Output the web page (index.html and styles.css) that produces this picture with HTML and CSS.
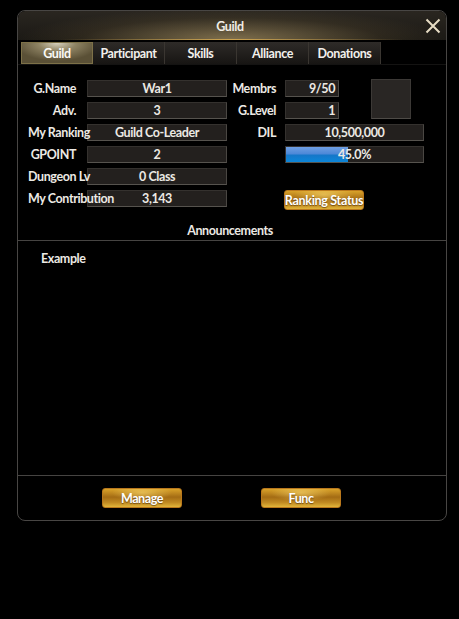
FILE: index.html
```html
<!DOCTYPE html>
<html>
<head>
<meta charset="utf-8">
<link rel="stylesheet" href="styles.css">
</head>
<body>
<div class="panel">
  <div class="header">
    <span class="title">Guild</span>
    <span class="close"><svg width="16" height="16" viewBox="0 0 16 16"><path d="M1.5 1.5 L14.5 14.5 M14.5 1.5 L1.5 14.5" stroke="#e6dcc4" stroke-width="2" fill="none"/></svg></span>
  </div>
  <div class="tabs">
    <div class="tab active">Guild</div>
    <div class="tab">Participant</div>
    <div class="tab">Skills</div>
    <div class="tab">Alliance</div>
    <div class="tab">Donations</div>
  </div>
  <div class="info">
    <div class="lbl">G.Name</div><div class="fld c3">War1</div>
    <div class="lbl r c4">Membrs</div><div class="fld c6 num">9/50</div>
    <div class="avatar"></div>

    <div class="lbl">Adv.</div><div class="fld c3">3</div>
    <div class="lbl r c4">G.Level</div><div class="fld c6 num">1</div>

    <div class="lbl">My Ranking</div><div class="fld c3">Guild Co-Leader</div>
    <div class="lbl r c4">DIL</div><div class="fld wide">10,500,000</div>

    <div class="lbl">GPOINT</div><div class="fld c3">2</div>
    <div class="fld wide bar"><div class="fill" style="width:45%"></div><span class="pct">45.0%</span></div>

    <div class="lbl">Dungeon Lv</div><div class="fld c3">0 Class</div>

    <div class="lbl">My Contribution</div><div class="fld c3">3,143</div>
    <div class="gold rank">Ranking Status</div>
  </div>
  <div class="ann-head">Announcements</div>
  <div class="ann-body">Example</div>
  <div class="footer">
    <div class="gold btn">Manage</div>
    <div class="gold btn">Func</div>
  </div>
</div>
</body>
</html>
```
FILE: styles.css
```css
html, body {
  margin: 0;
  padding: 0;
  background: #000;
}
body {
  font-family: Lato, "Noto Sans", sans-serif;
  font-weight: 700;
  font-size: 12.5px;
  letter-spacing: -0.4px;
  color: #ece9e4;
}
.panel {
  margin: 10px 0 0 17px;
  width: 428px;
  height: 509px;
  border: 1px solid #484644;
  border-radius: 8px;
  overflow: hidden;
  display: flex;
  flex-direction: column;
}
.header {
  height: 29px;
  flex: none;
  display: flex;
  align-items: center;
  justify-content: center;
  position: relative;
  background:
    linear-gradient(90deg, transparent 10%, rgba(214,170,80,0.9) 50%, transparent 90%) bottom / 100% 1px no-repeat,
    radial-gradient(ellipse 50% 110% at 50% 100%, rgba(195,170,115,0.6), rgba(120,100,60,0.18) 70%, transparent),
    linear-gradient(180deg, #2a2620, #1b1915);
  border-radius: 7px 7px 0 0;
}
.title {
  color: #f0ede6;
  margin: 2px 0 0 -4px;
}
.close {
  position: absolute;
  right: 5px;
  top: 7px;
  width: 16px;
  height: 16px;
  display: flex;
}
.tabs {
  margin-top: 2px;
  height: 22px;
  flex: none;
  display: flex;
  padding-left: 3px;
  border-bottom: 1px solid #141312;
}
.tab {
  width: 72px;
  height: 22px;
  box-sizing: border-box;
  display: flex;
  align-items: center;
  justify-content: center;
  padding-top: 1px;
  background: linear-gradient(180deg, #2e2b28, #171513);
  border-right: 1px solid #3a3631;
  color: #f2f0ec;
}
.tab.active {
  background: radial-gradient(ellipse 60% 90% at 50% 0%, #d6d0bc 0%, #8e8363 45%, #5a5036 100%);
  border: 1px solid #7d7148;
  color: #fbfaf6;
}
.info {
  flex: none;
  display: grid;
  grid-template-columns: 48px 11px 140px 49px 9px 54px 32px 40px 13px;
  grid-auto-rows: 17px;
  row-gap: 5px;
  padding: 15px 0 0 10px;
}
.lbl {
  grid-column: 1;
  white-space: nowrap;
  text-align: right;
  line-height: 18px;
  z-index: 1;
}
.lbl.r { grid-column: 4; }
.fld {
  background: #23201e;
  border: 1px solid #34312e;
  border-bottom-color: #56534e;
  border-right-color: #4a4743;
  box-sizing: border-box;
  text-align: center;
  line-height: 16px;
  white-space: nowrap;
  color: #ece9e4;
}
.c3 { grid-column: 3; }
.c6 { grid-column: 6; }
.num { text-align: right; padding-right: 3px; }
.wide { grid-column: 6 / 10; }
.avatar {
  grid-column: 8;
  grid-row: 1 / 3;
  margin-top: -1px;
  background: #292624;
  border: 1px solid #3c3936;
  border-bottom-color: #4e4b47;
}
.bar {
  position: relative;
  overflow: hidden;
}
.fill {
  position: absolute;
  left: 0;
  top: 0;
  bottom: 0;
  background: linear-gradient(180deg, #6f9fe2 0%, #4d88d8 45%, #1577c9 55%, #0c86d8 100%);
}
.pct {
  position: relative;
}
.gold {
  display: flex;
  align-items: center;
  justify-content: center;
  box-sizing: border-box;
  white-space: nowrap;
  border: 1px solid #b9781c;
  border-radius: 3px;
  background:
    radial-gradient(ellipse 55% 70% at 50% 20%, rgba(255,225,120,0.55), transparent 70%),
    linear-gradient(180deg, #d9a22a 0%, #a46c14 45%, #c08a22 75%, #e2b53a 100%);
  color: #fff;
  text-shadow: 0 1px 1px rgba(60,30,0,0.6);
}
.rank {
  grid-column: 6 / 8;
  width: 80px;
  height: 20px;
  margin-left: -1px;
  letter-spacing: -0.3px;
}
.ann-head {
  flex: none;
  margin-top: 15px;
  height: 18px;
  text-align: center;
  line-height: 18px;
  border-bottom: 1px solid #464442;
  padding-right: 4px;
}
.ann-body {
  flex: none;
  height: 225px;
  padding: 10px 0 0 23px;
  border-bottom: 1px solid #464442;
  box-sizing: border-box;
  height: 235px;
}
.footer {
  flex: 1;
  display: flex;
  gap: 79px;
  padding: 12px 0 0 84px;
}
.btn {
  width: 80px;
  height: 20px;
}
```
